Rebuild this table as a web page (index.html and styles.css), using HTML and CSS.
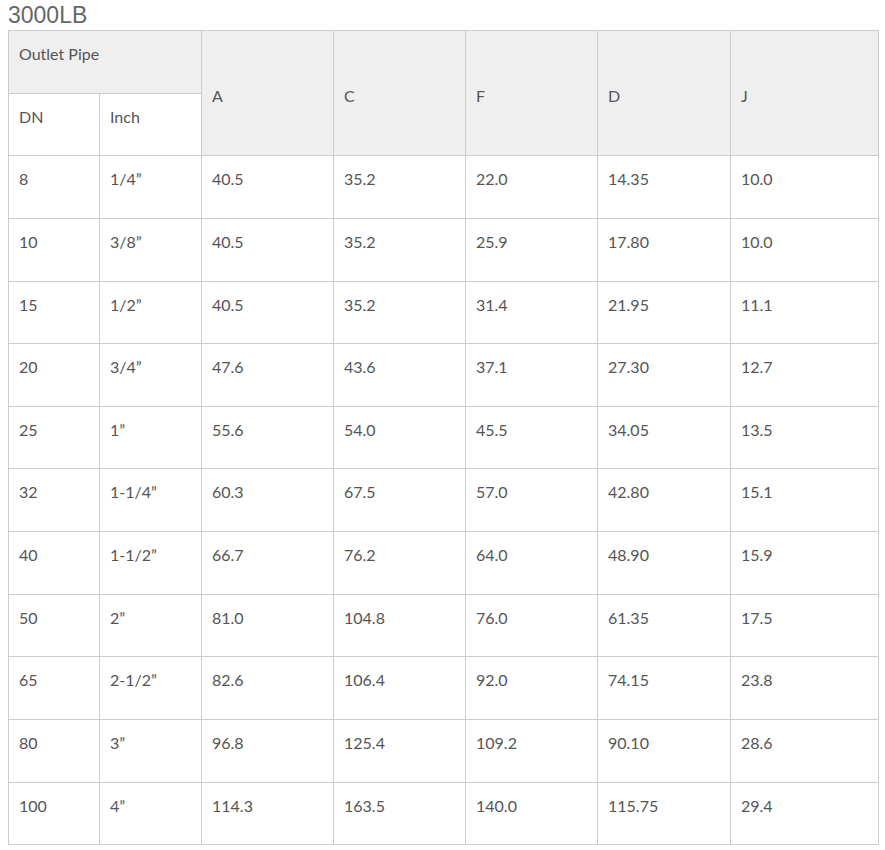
FILE: index.html
```html
<!DOCTYPE html>
<html>
<head>
<meta charset="utf-8">
<link rel="stylesheet" href="styles.css">
</head>
<body>
<h3 class="title">3000LB</h3>
<table class="spec">
<colgroup>
<col class="c1"><col class="c2"><col class="c3"><col class="c4"><col class="c5"><col class="c6"><col class="c7">
</colgroup>
<thead>
<tr><th colspan="2" class="top">Outlet Pipe</th><th rowspan="2" class="mid">A</th><th rowspan="2" class="mid">C</th><th rowspan="2" class="mid">F</th><th rowspan="2" class="mid">D</th><th rowspan="2" class="mid">J</th></tr>
<tr><th class="sub">DN</th><th class="sub">Inch</th></tr>
</thead>
<tbody>
<tr><td>8</td><td>1/4”</td><td>40.5</td><td>35.2</td><td>22.0</td><td>14.35</td><td>10.0</td></tr>
<tr><td>10</td><td>3/8”</td><td>40.5</td><td>35.2</td><td>25.9</td><td>17.80</td><td>10.0</td></tr>
<tr><td>15</td><td>1/2”</td><td>40.5</td><td>35.2</td><td>31.4</td><td>21.95</td><td>11.1</td></tr>
<tr><td>20</td><td>3/4”</td><td>47.6</td><td>43.6</td><td>37.1</td><td>27.30</td><td>12.7</td></tr>
<tr><td>25</td><td>1”</td><td>55.6</td><td>54.0</td><td>45.5</td><td>34.05</td><td>13.5</td></tr>
<tr><td>32</td><td>1-1/4”</td><td>60.3</td><td>67.5</td><td>57.0</td><td>42.80</td><td>15.1</td></tr>
<tr><td>40</td><td>1-1/2”</td><td>66.7</td><td>76.2</td><td>64.0</td><td>48.90</td><td>15.9</td></tr>
<tr><td>50</td><td>2”</td><td>81.0</td><td>104.8</td><td>76.0</td><td>61.35</td><td>17.5</td></tr>
<tr><td>65</td><td>2-1/2”</td><td>82.6</td><td>106.4</td><td>92.0</td><td>74.15</td><td>23.8</td></tr>
<tr><td>80</td><td>3”</td><td>96.8</td><td>125.4</td><td>109.2</td><td>90.10</td><td>28.6</td></tr>
<tr><td>100</td><td>4”</td><td>114.3</td><td>163.5</td><td>140.0</td><td>115.75</td><td>29.4</td></tr>
</tbody>
</table>
</body>
</html>
```
FILE: styles.css
```css
html, body {
  margin: 0;
  background: #fff;
}
body {
  padding: 0 8px;
  font-family: Lato, "Open Sans", sans-serif;
  color: #555;
}
.title {
  margin: 0;
  font-family: "Liberation Sans", Arial, sans-serif;
  font-size: 23px;
  line-height: 30px;
  font-weight: 400;
  color: #666;
}
.spec {
  width: 870px;
  border-collapse: collapse;
  table-layout: fixed;
  font-size: 16px;
}
.c1 { width: 91px; }
.c2 { width: 102px; }
.c3 { width: 132px; }
.c4 { width: 132px; }
.c5 { width: 132px; }
.c6 { width: 133px; }
.c7 { width: 148px; }
.spec th, .spec td {
  border: 1px solid #ccc;
  padding: 11px 10px 26.64px;
  line-height: 24px;
  text-align: left;
  vertical-align: top;
  font-weight: 400;
  color: #555;
}
.spec th.top, .spec th.mid {
  background: #efefef;
}
.spec th.mid {
  vertical-align: middle;
  padding-top: 12px;
  padding-bottom: 6px;
}
.spec th.sub {
  background: #fff;
}
```
